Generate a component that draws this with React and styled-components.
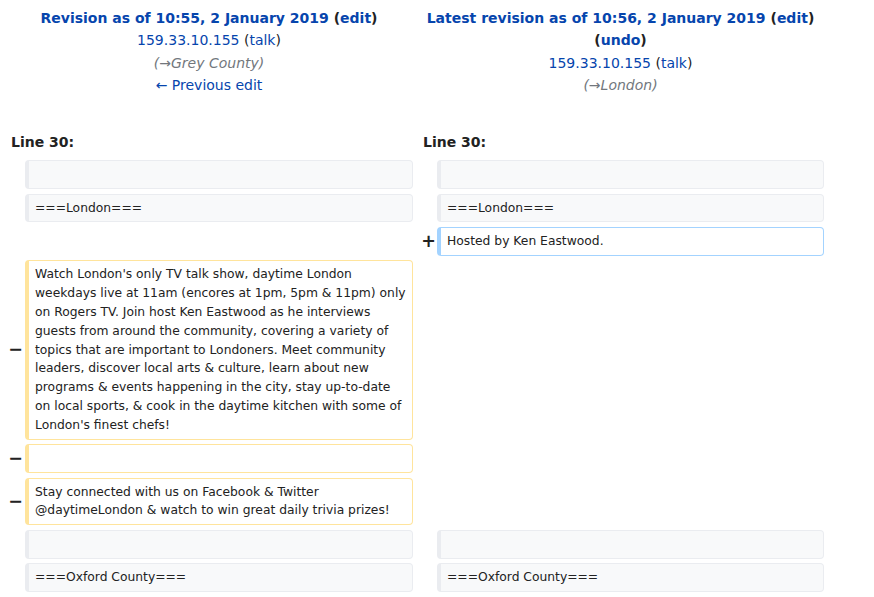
import { createGlobalStyle } from "styled-components";
import styled from "styled-components";

const GlobalStyle = createGlobalStyle`
  body {
    margin: 0;
    background: #fff;
    color: #222;
    font-family: "DejaVu Sans", sans-serif;
  }
`;

const DiffGrid = styled.div`
  display: grid;
  grid-template-columns: 16px 388px 16px 387px;
  column-gap: 4px;
  row-gap: 4.6px;
  padding: 4px 0 0 5px;
  width: 824px;
  box-sizing: border-box;
`;

const TitleCell = styled.div`
  grid-column: span 2;
  text-align: center;
  font-size: 14px;
  line-height: 22.4px;
  padding: 3px 7px;
  margin-bottom: ${(props) => props.gap || "0"};
`;

const LineNo = styled.div`
  grid-column: span 2;
  font-size: 14px;
  font-weight: bold;
  line-height: 22.4px;
  padding: 0 6px 2px;
`;

const Link = styled.a`
  color: #0645ad;
  text-decoration: none;
`;

const Comment = styled.span`
  color: #72777d;
  font-style: italic;
`;

const Marker = styled.div`
  display: flex;
  align-items: center;
  justify-content: flex-end;
  font-size: 17.5px;
  font-weight: bold;
  line-height: 1;
  color: #222;
  margin-right: ${(props) => props.shift || "0"};
`;

const borders = {
  context: "#eaecf0",
  deleted: "#ffe49c",
  added: "#a3d3ff",
};

const Line = styled.div`
  font-size: 12.32px;
  line-height: 18.8px;
  min-height: 18.8px;
  padding: 4px 6px;
  white-space: pre-wrap;
  border-style: solid;
  border-width: 1px 1px 1px 4px;
  border-radius: 4px;
  border-color: ${(props) => borders[props.kind]};
  background: ${(props) => (props.kind === "context" ? "#f8f9fa" : "#fff")};
`;

const Empty = styled.div``;

const bigText =
  "Watch London's only TV talk show, daytime London weekdays live at 11am (encores at 1pm, 5pm & 11pm) only on Rogers TV. Join host Ken Eastwood as he interviews guests from around the community, covering a variety of topics that are important to Londoners. Meet community leaders, discover local arts & culture, learn about new programs & events happening in the city, stay up-to-date on local sports, & cook in the daytime kitchen with some of London's finest chefs!";

const socialText =
  "Stay connected with us on Facebook & Twitter @daytimeLondon & watch to win great daily trivia prizes!";

function Context({ text }) {
  return (
    <>
      <Marker />
      <Line kind="context">{text}</Line>
      <Marker />
      <Line kind="context">{text}</Line>
    </>
  );
}

function Deleted({ text }) {
  return (
    <>
      <Marker shift="-2px">−</Marker>
      <Line kind="deleted">{text}</Line>
      <Empty />
      <Empty />
    </>
  );
}

function Added({ text }) {
  return (
    <>
      <Empty />
      <Empty />
      <Marker shift="-3px">+</Marker>
      <Line kind="added">{text}</Line>
    </>
  );
}

export default function App() {
  return (
    <>
      <GlobalStyle />
      <DiffGrid>
        <TitleCell gap="27px">
          <strong>
            <Link href="#">Revision as of 10:55, 2 January 2019</Link> (
            <Link href="#">edit</Link>)
          </strong>
          <div>
            <Link href="#">159.33.10.155</Link> (<Link href="#">talk</Link>)
          </div>
          <div>
            <Comment>(→Grey County)</Comment>
          </div>
          <div>
            <Link href="#">← Previous edit</Link>
          </div>
        </TitleCell>
        <TitleCell gap="27px">
          <strong>
            <Link href="#">Latest revision as of 10:56, 2 January 2019</Link>{" "}
            (<Link href="#">edit</Link>)
          </strong>{" "}
          <strong>
            (<Link href="#">undo</Link>)
          </strong>
          <div>
            <Link href="#">159.33.10.155</Link> (<Link href="#">talk</Link>)
          </div>
          <div>
            <Comment>(→London)</Comment>
          </div>
        </TitleCell>

        <LineNo>Line 30:</LineNo>
        <LineNo>Line 30:</LineNo>

        <Context text="" />
        <Context text="===London===" />
        <Added text="Hosted by Ken Eastwood." />
        <Deleted text={bigText} />
        <Deleted text="" />
        <Deleted text={socialText} />
        <Context text="" />
        <Context text="===Oxford County===" />
      </DiffGrid>
    </>
  );
}
